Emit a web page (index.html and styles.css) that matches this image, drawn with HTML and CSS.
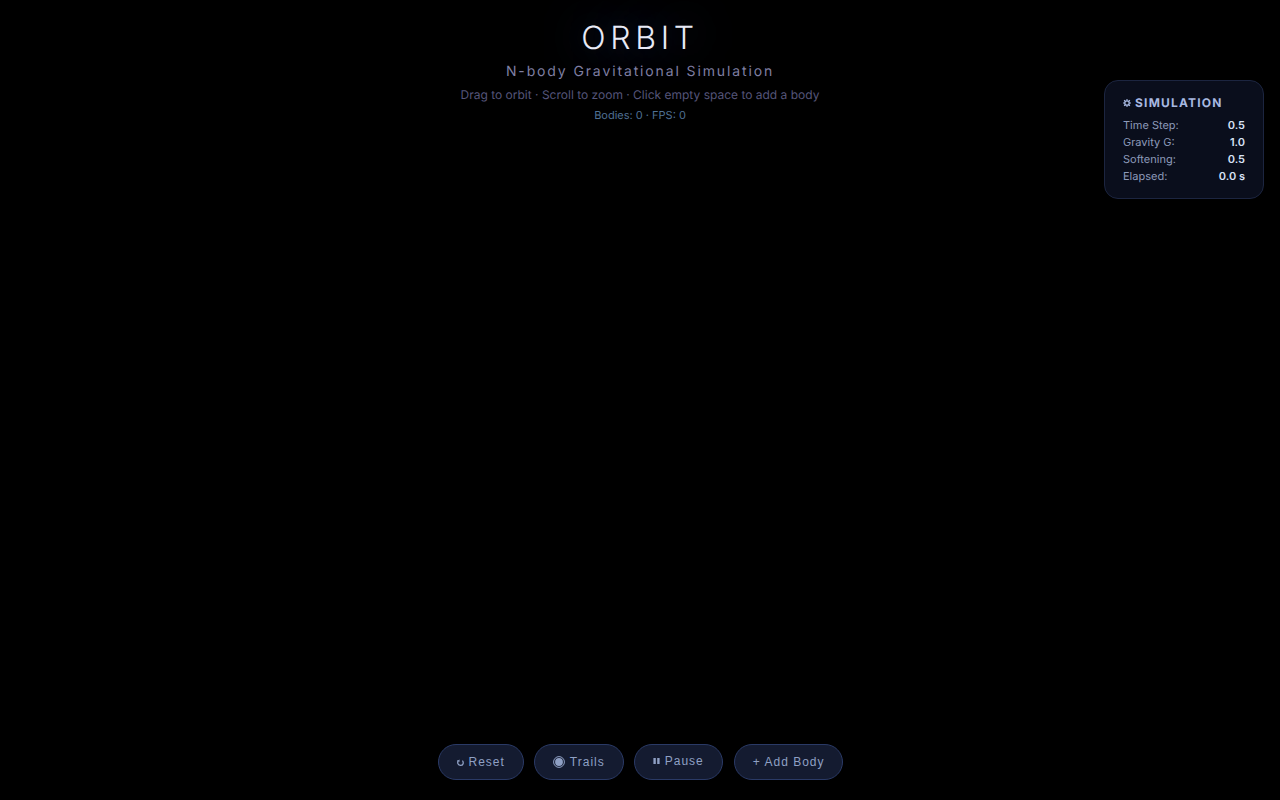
FILE: index.html
```html
<!DOCTYPE html>
<html lang="en">
<head>
<meta charset="utf-8">
<title>Orbit</title>
<link rel="stylesheet" href="styles.css">
</head>
<body>
<div class="stage">
  <header class="header">
    <h1 class="title">ORBIT</h1>
    <p class="subtitle">N-body Gravitational Simulation</p>
    <p class="hint">Drag to orbit · Scroll to zoom · Click empty space to add a body</p>
    <p class="stats">Bodies: 0 · FPS: 0</p>
  </header>
  <aside class="panel">
    <h2 class="panel-title">
      <svg class="icon-gear" viewBox="0 0 8 8" aria-hidden="true">
        <circle class="gear-ring" cx="4" cy="4" r="2.2"/>
        <path class="gear-teeth" d="M4 0v1.8M4 6.2V8M0 4h1.8M6.2 4H8M1.1 1.1l1.2 1.2M5.7 5.7l1.2 1.2M6.9 1.1L5.7 2.3M2.3 5.7L1.1 6.9"/>
      </svg>
      <span>SIMULATION</span>
    </h2>
    <div class="row"><span>Time Step:</span><span class="value">0.5</span></div>
    <div class="row"><span>Gravity G:</span><span class="value">1.0</span></div>
    <div class="row"><span>Softening:</span><span class="value">0.5</span></div>
    <div class="row"><span>Elapsed:</span><span class="value">0.0 s</span></div>
  </aside>
  <nav class="controls">
    <button class="btn btn-reset">
      <svg class="icon-reset" viewBox="0 0 8 8" aria-hidden="true">
        <path class="stroke" d="M1.2 1.4C.6 2.6.6 3.6.9 4.7 1.4 6.7 5.2 7 6 4.9 6.4 3.8 6.3 2.6 5.4 1.6"/>
        <path class="fill" d="M0 1.9 2.6.5 2.4 3z"/>
      </svg>
      <span>Reset</span>
    </button>
    <button class="btn">
      <svg class="icon-trails" viewBox="0 0 12 12" aria-hidden="true">
        <circle class="ring" cx="6" cy="6" r="5.4"/>
        <circle class="fill" cx="6" cy="6" r="3.9"/>
      </svg>
      <span>Trails</span>
    </button>
    <button class="btn btn-raised">
      <svg class="icon-pause" viewBox="0 0 7 6" aria-hidden="true">
        <rect class="fill" x="0.4" width="2.4" height="6"/>
        <rect class="fill" x="4.2" width="2.4" height="6"/>
      </svg>
      <span>Pause</span>
    </button>
    <button class="btn btn-add"><span>+ Add Body</span></button>
  </nav>
</div>
</body>
</html>
```
FILE: styles.css
```css
* { box-sizing: border-box; margin: 0; padding: 0; }
html, body { height: 100%; background: #000; overflow: hidden; }
body { font-family: Inter, sans-serif; text-rendering: geometricPrecision; }
.stage { position: relative; width: 100%; height: 100%; }
.header { position: absolute; top: 16px; left: 0; right: 0; text-align: center; }
.title {
  font-size: 32px; font-weight: 350; letter-spacing: 4.7px; line-height: 44px;
  color: #e8eaf6; text-shadow: 0 0 40px rgba(100, 140, 255, 0.5);
}
.subtitle { font-size: 14px; letter-spacing: 1.87px; color: #7f7fa3; line-height: 17px; margin-top: 3px; }
.hint { font-size: 12px; color: #55557a; line-height: 15px; margin-top: 7px; }
.stats { font-size: 11px; color: #4f7094; line-height: 14px; margin-top: 6px; }
.panel {
  position: absolute; top: 80px; right: 16px; width: 160px; height: 119px;
  padding: 14px 18px; background: #0a0e1c;
  border: 1px solid #1c2540; border-radius: 14px;
}
.panel-title {
  display: flex; align-items: center; gap: 5px;
  font-size: 12px; font-weight: 700; letter-spacing: 1.2px; color: #a8b9e2; line-height: 15px; margin-bottom: 7px;
}
.icon-gear { width: 8px; height: 8px; margin-right: -1px; }
.gear-ring { fill: none; stroke: #a8b9e2; stroke-width: 1.3; }
.gear-teeth { fill: none; stroke: #a8b9e2; stroke-width: 1.1; }
.row { display: flex; justify-content: space-between; font-size: 11px; line-height: 17px; color: #8d9aba; }
.value { font-weight: 600; color: #d8e2f6; }
.controls { position: absolute; bottom: 20px; left: 0; right: 0; display: flex; justify-content: center; gap: 10px; }
.btn {
  display: inline-flex; align-items: center; gap: 5px;
  height: 36px; padding: 0 18px; border-radius: 18px; font-family: "Liberation Sans", sans-serif; font-size: 12px;
  letter-spacing: 1px; color: #8fa0c4; background: #141b30; border: 1px solid #2a3a66;
}
.btn-raised { padding-bottom: 2px; }
.btn-reset { padding-bottom: 1px; gap: 4px; }
.btn-add { padding-right: 17px; margin-left: 1px; }
.btn .fill { fill: #8fa0c4; }
.btn .stroke { fill: none; stroke: #8fa0c4; stroke-width: 1.3; }
.btn .ring { fill: none; stroke: #8fa0c4; stroke-width: 1; }
.icon-reset { width: 8px; height: 8px; margin-top: 2px; }
.icon-trails { width: 12px; height: 12px; }
.icon-pause { width: 7px; height: 6px; }
```
